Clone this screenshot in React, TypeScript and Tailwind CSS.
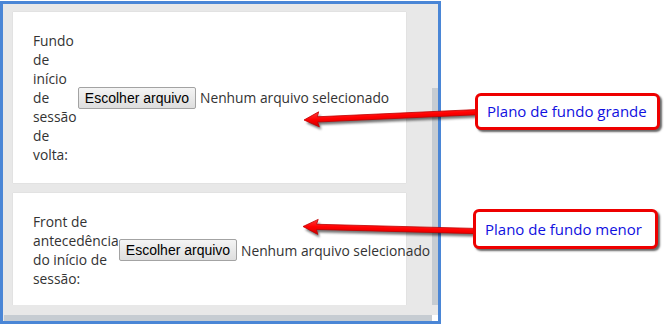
import React from "react";

const font = { fontFamily: '"Open Sans", "Noto Sans", sans-serif' };

function FileRow({ label, labelWidth }: { label: string; labelWidth: string }) {
  return (
    <div className="flex items-center">
      <div className={`${labelWidth} shrink-0 text-[13.8px] leading-[19px] text-[#333]`}>{label}</div>
      <button className="shrink-0 w-[118px] h-[22px] border border-[#a3a3a3] rounded-[2px] bg-gradient-to-b from-[#f4f4f4] to-[#dedede] text-[14px] leading-[20px] text-black whitespace-nowrap font-['Liberation_Sans',Arial,sans-serif]">
        Escolher arquivo
      </button>
      <span className="ml-[4px] whitespace-nowrap text-[13.8px] leading-[19px] text-[#333]">
        Nenhum arquivo selecionado
      </span>
    </div>
  );
}

function Arrow({ x, y, len, angle }: { x: number; y: number; len: number; angle: number }) {
  const pts = `0,0 15,-7.5 13.5,-2.6 ${len},-2.6 ${len},2.6 13.5,2.6 15,7.5`;
  return (
    <g transform={`translate(${x} ${y}) rotate(${angle})`}>
      <polygon points={pts} fill="#000" opacity="0.55" transform="translate(2 3)" filter="url(#blur)" />
      <polygon points={pts} fill="url(#red)" stroke="#c00000" strokeWidth="0.8" />
    </g>
  );
}

export default function App() {
  return (
    <div className="relative w-[665px] h-[334px] bg-white overflow-hidden" style={font}>
      {/* framed panel */}
      <div className="mt-[1px] w-[441px] h-[323px] border-[3px] border-[#4a86d6] bg-[#e8e8e8] flex flex-col">
        <div className="flex flex-1 min-h-0">
          <div className="flex-1 overflow-hidden pl-[10px] pt-[8px] flex flex-col gap-[10px]">
            <div className="w-[393px] bg-white pl-[20px] py-[19px] shadow-[0_0_1px_rgba(0,0,0,0.15)]">
              <FileRow label="Fundo de início de sessão de volta:" labelWidth="w-[45px]" />
            </div>
            <div className="w-[393px] bg-white pl-[20px] pt-[19px] pb-[18px] shadow-[0_0_1px_rgba(0,0,0,0.15)]">
              <FileRow label="Front de antecedência do início de sessão:" labelWidth="w-[86px]" />
            </div>
          </div>
          <div className="w-[6px] flex flex-col">
            <div className="h-[84px]" />
            <div className="flex-1 bg-[#c6ccd2]" />
          </div>
        </div>
        <div className="h-[6px] flex mt-[10px] ml-[1px]">
          <div className="flex-1 bg-[#c6ccd2]" />
          <div className="w-[6px] bg-white" />
        </div>
      </div>

      {/* annotation arrows */}
      <svg className="absolute left-0 top-0 pointer-events-none" width="665" height="334">
        <defs>
          <linearGradient id="red" x1="0" y1="0" x2="0" y2="1">
            <stop offset="0" stopColor="#ff3a3a" />
            <stop offset="0.5" stopColor="#ff0000" />
            <stop offset="1" stopColor="#d00000" />
          </linearGradient>
          <filter id="blur" x="-10%" y="-50%" width="120%" height="200%">
            <feGaussianBlur stdDeviation="1" />
          </filter>
        </defs>
        <Arrow x={304} y={120} len={174} angle={-2.6} />
        <Arrow x={303} y={226.5} len={173} angle={1.5} />
      </svg>

      {/* callouts */}
      <div className="absolute left-[475px] top-[93px] w-[185px] h-[37px] border-[3px] border-[#ee0000] rounded-[6px] bg-white shadow-[2px_2px_2px_rgba(0,0,0,0.6)] flex items-center pl-[9px] text-[15px] text-[#1010e0]">
        Plano de fundo grande
      </div>
      <div className="absolute left-[473px] top-[209px] w-[185px] h-[40px] border-[3px] border-[#ee0000] rounded-[6px] bg-white shadow-[2px_2px_2px_rgba(0,0,0,0.6)] flex items-center pl-[9px] text-[15px] text-[#1010e0]">
        Plano de fundo menor
      </div>
    </div>
  );
}
